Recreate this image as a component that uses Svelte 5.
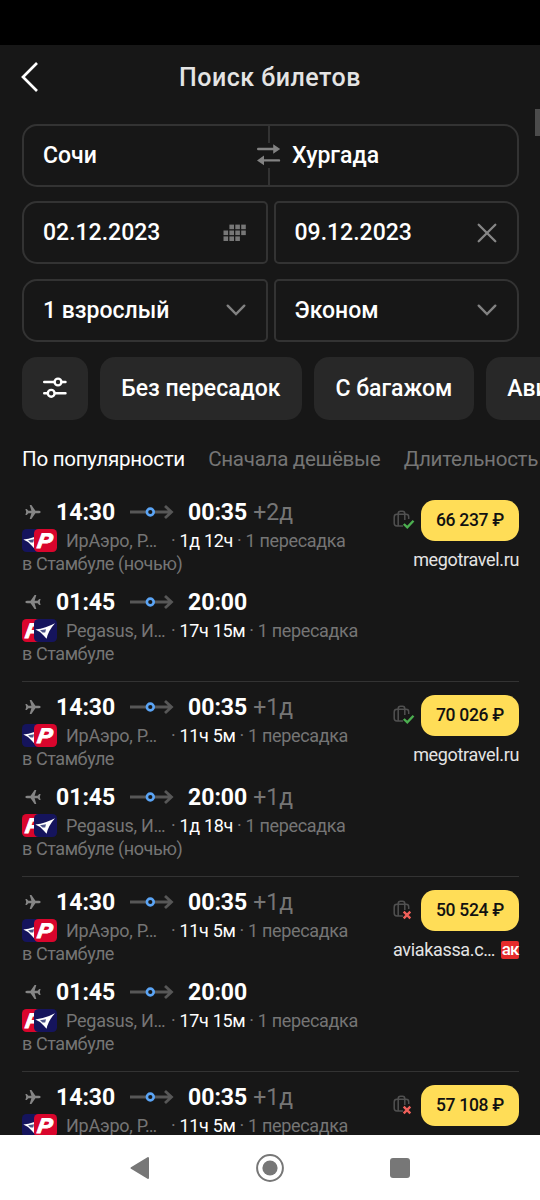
<script>
  const chips = ['Без пересадок', 'С багажом', 'Авиакомпании']
  const tabs = ['По популярности', 'Сначала дешёвые', 'Длительность']

  // night: the transfer happens at night, shown in brackets after the city
  const outbound = { dep: '14:30', arr: '00:35', airlines: 'ИрАэро, P…', logos: ['iraero', 'pegasus'] }
  const inbound = { dep: '01:45', arr: '20:00', airlines: 'Pegasus, И…', logos: ['pegasus', 'iraero'], back: true }

  const offers = [
    {
      price: '66 237 ₽', seller: 'megotravel.ru', baggage: true,
      legs: [
        { ...outbound, days: '+2д', duration: '1д 12ч', night: true },
        { ...inbound, duration: '17ч 15м' }
      ]
    },
    {
      price: '70 026 ₽', seller: 'megotravel.ru', baggage: true,
      legs: [
        { ...outbound, days: '+1д', duration: '11ч 5м' },
        { ...inbound, days: '+1д', duration: '1д 18ч', night: true }
      ]
    },
    {
      price: '50 524 ₽', seller: 'aviakassa.c…', baggage: false, badge: 'aк',
      legs: [
        { ...outbound, days: '+1д', duration: '11ч 5м' },
        { ...inbound, duration: '17ч 15м' }
      ]
    },
    {
      price: '57 108 ₽', baggage: false,
      legs: [{ ...outbound, days: '+1д', duration: '11ч 5м' }]
    }
  ]
</script>

{#snippet logo(name)}
  <svg class="logo" viewBox="0 0 23 23">
    {#if name === 'pegasus'}
      <rect width="23" height="23" rx="4.5" fill="#d9052c" />
      <text x="5.4" y="18.8" class="logo-letter" transform="skewX(-9)" textLength="14.5" lengthAdjust="spacingAndGlyphs">P</text>
    {:else}
      <rect width="23" height="23" rx="4.5" fill="#15145c" />
      <path d="M1.3 10.6 Q12 9 21 4.2 Q14 12 12.6 19.8 L9.6 16.4 Q6 12.4 1.3 10.6Z" fill="#fff" />
      <path d="M6 11.2 L12 10.2 L11.2 13.6 L8.6 13.4Z" fill="#4d5488" />
    {/if}
  </svg>
{/snippet}

<div class="screen">
  <div class="status"></div>

  <header>
    <svg class="back" width="22" height="34" viewBox="0 0 22 34">
      <path d="M17 3 L3 17 L17 31" fill="none" stroke="#fff" stroke-width="2.7" />
    </svg>
    <h1>Поиск билетов</h1>
    <span class="scroll-thumb"></span>
  </header>

  <main>
    <form>
      <div class="route">
        <span class="from">Сочи</span>
        <span class="swap">
          <svg width="24" height="24" viewBox="0 0 24 24">
            <path d="M1.2 6 H17 M22 17.4 H7" stroke="#828282" stroke-width="2.4" stroke-linecap="round" />
            <path d="M16.2 1.2 L23.2 6 L16.2 10.8Z M7 12.6 L0 17.4 L7 22.2Z" fill="#828282" />
          </svg>
        </span>
        <span class="to">Хургада</span>
      </div>

      <div class="pair">
        <div class="field left">
          <span>02.12.2023</span>
          <svg width="23" height="18" viewBox="0 0 23 18" fill="#777">
            {#each [[1, 2, 3], [0, 1, 2, 3], [0, 1, 2]] as row, y}
              {#each row as x}
                <rect x={x * 5.9 + 0.5} y={y * 5.9 + 0.6} width="4.6" height="4.6" />
              {/each}
            {/each}
          </svg>
        </div>
        <div class="field right">
          <span>09.12.2023</span>
          <svg width="20" height="20" viewBox="0 0 20 20">
            <path d="M1.7 1.7 L18.3 18.3 M18.3 1.7 L1.7 18.3" stroke="#868686" stroke-width="2.3" stroke-linecap="round" />
          </svg>
        </div>
      </div>

      <div class="pair">
        {#each ['1 взрослый', 'Эконом'] as label, i}
          <div class="field" class:left={i === 0} class:right={i === 1}>
            <span>{label}</span>
            <svg width="20" height="12" viewBox="0 0 20 12">
              <path d="M1.7 1.7 L10 10 L18.3 1.7" fill="none" stroke="#828282" stroke-width="2.4" stroke-linecap="round" />
            </svg>
          </div>
        {/each}
      </div>
    </form>

    <div class="chips">
      <button class="chip filter" aria-label="Фильтры">
        <svg width="24" height="22" viewBox="0 0 24 22" fill="none" stroke="#fff" stroke-width="2.4" stroke-linecap="round">
          <path d="M1.2 5 H11 M19 5 H22.5 M1.2 16.3 H4 M12 16.3 H22.5" />
          <circle cx="15" cy="5" r="3.4" />
          <circle cx="8.2" cy="16.3" r="3.4" />
        </svg>
      </button>
      {#each chips as chip}
        <button class="chip">{chip}</button>
      {/each}
    </div>

    <nav class="tabs">
      {#each tabs as tab, i}
        <span class:active={i === 0}>{tab}</span>
      {/each}
    </nav>

    {#each offers as offer}
      <article>
        <div class="legs">
          {#each offer.legs as leg}
            <section class="leg">
              <div class="times">
                <svg class="plane" class:back-way={leg.back} width="16" height="16" viewBox="0 0 16 16">
                  <path d="M15.7 8 Q15.5 6.8 13.7 6.8 H10.4 L6.4 1 H4.7 L6.4 6.8 H3.4 L1.8 4.9 H.4 L1.2 8 L.4 11.1 H1.8 L3.4 9.2 H6.4 L4.7 15 H6.4 L10.4 9.2 H13.7 Q15.5 9.2 15.7 8Z" fill="#858585" />
                </svg>
                <b class="dep">{leg.dep}</b>
                <svg class="track" width="44" height="16" viewBox="0 0 44 16" fill="none">
                  <path d="M0 8 H42 M35 2 L41.5 8 L35 14" stroke="#575757" stroke-width="2.8" />
                  <circle cx="20.3" cy="8" r="3.4" fill="#171717" stroke="#5ba5f6" stroke-width="2.6" />
                </svg>
                <b>{leg.arr}</b>
                {#if leg.days}<span class="days">{leg.days}</span>{/if}
              </div>
              <div class="details">
                <span class="logos">
                  {#each leg.logos as name}
                    {@render logo(name)}
                  {/each}
                </span>
                <span class="airlines">{leg.airlines}</span>
                <span class="duration">· <em>{leg.duration}</em> · 1 пересадка</span>
              </div>
              <div class="transfer">в Стамбуле{leg.night ? ' (ночью)' : ''}</div>
            </section>
          {/each}
        </div>

        <aside>
          <div class="buy">
            <svg width="22" height="22" viewBox="0 0 22 22" fill="none">
              <path d="M15.7 9 V6.8 Q15.7 4.3 13 4.3 H4 Q1.2 4.3 1.2 7 V13.3 Q1.2 16 4 16 H10 M5.2 16 V3.5 Q5.2 1.2 7.4 1.2 H9.6 Q11.8 1.2 11.8 3.5 V10" stroke="#505050" stroke-width="1.5" />
              {#if offer.baggage}
                <path d="M10.8 14 L14.3 17.4 L20.5 10.8" stroke="#4caf50" stroke-width="2.4" />
              {:else}
                <path d="M10.7 11.7 L17.3 18.3 M17.3 11.7 L10.7 18.3" stroke="#f0605a" stroke-width="2.4" />
              {/if}
            </svg>
            <button class="price">{offer.price}</button>
          </div>
          {#if offer.seller}
            <div class="seller">
              {offer.seller}
              {#if offer.badge}<span class="badge">{offer.badge}</span>{/if}
            </div>
          {/if}
        </aside>
      </article>
    {/each}
  </main>

  <footer>
    <svg width="20" height="24" viewBox="0 0 20 24">
      <path d="M1.5 12 L18 2 V22Z" fill="#777" stroke="#777" stroke-width="2" stroke-linejoin="round" />
    </svg>
    <svg width="28" height="28" viewBox="0 0 28 28">
      <circle cx="14" cy="14" r="12.9" fill="none" stroke="#777" stroke-width="2" />
      <circle cx="14" cy="14" r="7.6" fill="#777" />
    </svg>
    <svg width="20" height="20" viewBox="0 0 20 20">
      <rect width="20" height="20" rx="3" fill="#777" />
    </svg>
  </footer>
</div>

<style>
  :global(body) {
    background: #171717;
  }

  .screen {
    display: flex;
    flex-direction: column;
    width: 540px;
    height: 1200px;
    overflow: hidden;
    background: #171717;
    color: #fff;
    font-family: Roboto, sans-serif;
  }

  svg {
    display: block;
    flex-shrink: 0;
  }

  .status {
    height: 45px;
    flex-shrink: 0;
    background: #000;
  }

  header {
    position: relative;
    display: flex;
    align-items: center;
    justify-content: center;
    height: 64px;
    flex-shrink: 0;
  }

  .back {
    position: absolute;
    left: 20px;
    top: 15px;
  }

  h1 {
    margin: 0;
    font-size: 25px;
    font-weight: 500;
    letter-spacing: 0.5px;
    color: #e4e4e4;
  }

  .scroll-thumb {
    position: absolute;
    right: 0;
    top: 64px;
    width: 5px;
    height: 27px;
    background: #4c4c4c;
  }

  main {
    flex: 1;
    min-height: 0;
    overflow: hidden;
    padding: 14.6px 0 0 22px;
  }

  form {
    display: flex;
    flex-direction: column;
    gap: 14.6px;
    width: 497px;
    font-size: 23px;
    font-weight: 500;
  }

  .route,
  .field {
    box-sizing: border-box;
    display: flex;
    align-items: center;
    height: 63px;
    border: 2px solid #333;
    border-radius: 15px;
  }

  .from {
    width: 214px;
    padding-left: 19px;
  }

  .swap {
    display: flex;
    align-items: center;
    height: 59px;
    background: linear-gradient(#333 0 17px, transparent 17px 42px, #333 42px) center / 2px 100% no-repeat;
  }

  .to {
    padding-left: 11px;
  }

  .pair {
    display: flex;
    gap: 6px;
  }

  .field {
    flex: 1;
    justify-content: space-between;
    padding: 0 20px 0 19px;
  }

  .field.left {
    border-radius: 15px 5px 5px 15px;
  }

  .field.right {
    border-radius: 5px 15px 15px 5px;
  }

  .chips {
    display: flex;
    gap: 12px;
    margin-top: 14.8px;
  }

  .chip {
    flex-shrink: 0;
    height: 63px;
    padding: 0 21.7px 0 21.2px;
    border: 0;
    border-radius: 15px;
    background: #282828;
    color: #fff;
    font: 500 23px Roboto, sans-serif;
    white-space: nowrap;
  }

  .filter {
    padding: 0 21px;
  }

  .tabs {
    display: flex;
    align-items: center;
    gap: 23.3px;
    height: 54px;
    padding: 12px 0 0;
    font-size: 20.6px;
    letter-spacing: -0.3px;
    color: #757575;
    white-space: nowrap;
  }

  .tabs .active {
    color: #fff;
  }

  article {
    box-sizing: border-box;
    display: flex;
    justify-content: space-between;
    width: 497px;
    height: 195px;
    padding-top: 10px;
    border-bottom: 1px solid #333;
    white-space: nowrap;
  }

  .tabs + article {
    margin-top: 1px;
  }

  .legs {
    display: flex;
    flex-direction: column;
    gap: 12px;
  }

  .leg {
    height: 78px;
  }

  .times {
    display: flex;
    align-items: center;
    height: 31px;
    font-size: 23px;
  }

  .plane {
    margin: 0 15px 0 3px;
  }

  .back-way {
    transform: scaleX(-1);
  }

  .dep {
    width: 74px;
  }

  .track {
    margin-right: 14px;
  }

  .days {
    margin-left: 6px;
    color: #757575;
  }

  .details {
    display: flex;
    align-items: center;
    height: 26px;
    font-size: 18px;
    letter-spacing: -0.34px;
    color: #757575;
  }

  .details em {
    font-style: normal;
    color: #fff;
  }

  .logos {
    display: flex;
    width: 44px;
  }

  .logo {
    width: 23px;
    height: 23px;
  }

  .logo + .logo {
    margin-left: -11px;
  }

  .logo-letter {
    font: italic 700 21px "Liberation Sans", sans-serif;
    fill: #fff;
    stroke: #fff;
    stroke-width: 1px;
  }

  .airlines {
    width: 105px;
    letter-spacing: -0.25px;
  }

  .transfer {
    height: 20px;
    font-size: 18px;
    letter-spacing: -0.42px;
    line-height: 20px;
    color: #757575;
  }

  aside {
    display: flex;
    flex-direction: column;
    align-items: flex-end;
    padding-top: 3.6px;
  }

  .buy {
    display: flex;
    align-items: center;
    gap: 6px;
  }

  .price {
    width: 98px;
    height: 41px;
    padding: 0 0 1px;
    border: 0;
    border-radius: 14px;
    background: #ffdd57;
    color: #111;
    font: 500 17.5px Roboto, sans-serif;
    letter-spacing: -0.3px;
  }

  .seller {
    display: flex;
    align-items: center;
    gap: 6px;
    margin-top: 7.4px;
    font-size: 18px;
    letter-spacing: -0.34px;
    line-height: 22px;
    color: #e4e4e4;
  }

  .badge {
    width: 18px;
    height: 18px;
    border-radius: 2px;
    background: #e52b2b;
    color: #fff;
    font-size: 17px;
    font-weight: 500;
    letter-spacing: -1px;
    line-height: 16px;
    text-align: center;
  }

  footer {
    display: flex;
    align-items: center;
    justify-content: center;
    gap: 106px;
    height: 65px;
    flex-shrink: 0;
    background: #fff;
  }
</style>
